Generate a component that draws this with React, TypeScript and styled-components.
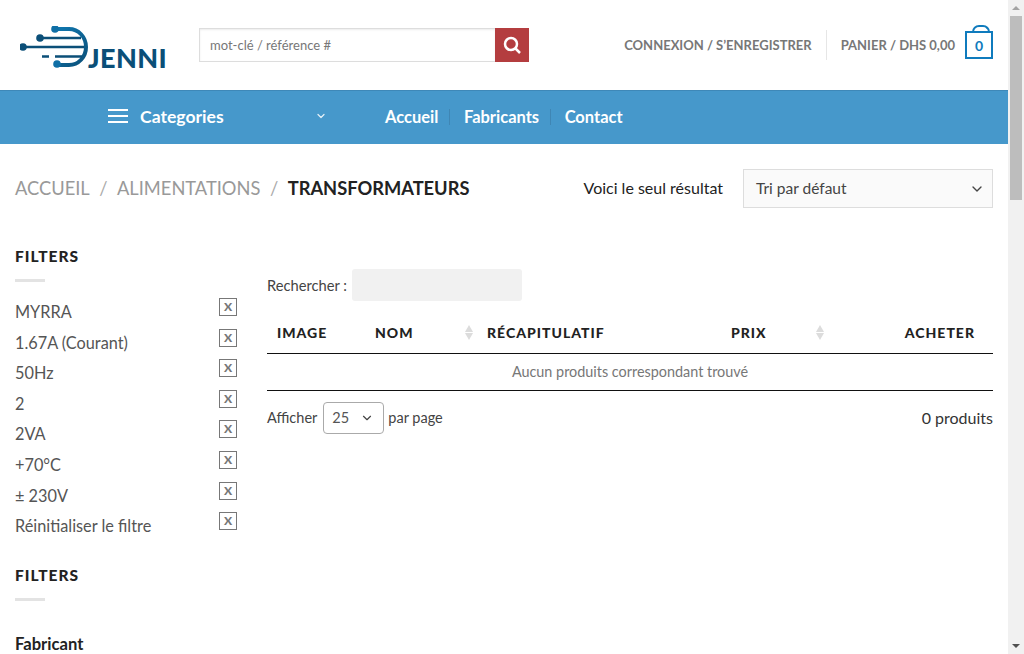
import styled, { createGlobalStyle } from "styled-components";
import { ChevronDown } from "lucide-react";

const GlobalStyle = createGlobalStyle`
  html, body {
    margin: 0;
    padding: 0;
    background: #fff;
    font-family: "Lato", "Liberation Sans", sans-serif;
    color: #555;
  }
  * { box-sizing: border-box; }
`;

const Shell = styled.div`
  display: flex;
  height: 654px;
  overflow: hidden;
`;

const Page = styled.div`
  flex: 1;
  min-width: 0;
`;

const ScrollTrack = styled.div`
  width: 16px;
  flex-shrink: 0;
  background: #f1f1f1;
  display: flex;
  flex-direction: column;
`;

const ScrollButton = styled.div<{ $down?: boolean }>`
  height: 16px;
  display: flex;
  align-items: center;
  justify-content: center;
  margin-top: ${(p) => (p.$down ? "auto" : "0")};
  &::after {
    content: "";
    width: 0;
    height: 0;
    border-left: 4px solid transparent;
    border-right: 4px solid transparent;
    ${(p) => (p.$down ? "border-top: 4px solid #505050;" : "border-bottom: 4px solid #a3a3a3;")}
  }
`;

const ScrollThumb = styled.div`
  height: 184px;
  margin: 0 2px;
  background: #bdbdbd;
`;

const Header = styled.header`
  height: 90px;
  display: flex;
  align-items: center;
  padding: 0 15px 0 20px;
`;

const Logo = styled.a`
  display: flex;
  align-items: flex-end;
  width: 179px;
  height: 42px;
  flex-shrink: 0;
  margin-top: 4px;
`;

const LogoText = styled.span`
  font-weight: 900;
  font-size: 27px;
  line-height: 20px;
  color: #0b4f78;
  letter-spacing: 0.4px;
`;

const SearchForm = styled.form`
  display: flex;
  width: 330px;
  height: 34px;
`;

const SearchInput = styled.div`
  flex: 1;
  border: 1px solid #ddd;
  border-right: none;
  box-shadow: inset 0 1px 2px rgba(0, 0, 0, 0.08);
  font-size: 13px;
  line-height: 32px;
  padding-left: 10px;
  color: #777;
`;

const SearchButton = styled.button`
  width: 34px;
  border: none;
  padding: 0;
  background: #b43d3f;
  display: flex;
  align-items: center;
  justify-content: center;
`;

const Account = styled.div`
  margin-left: auto;
  display: flex;
  align-items: center;
`;

const AccountLink = styled.a`
  font-size: 13px;
  font-weight: 700;
  color: #777;
  white-space: nowrap;
`;

const Divider = styled.span`
  width: 1px;
  height: 30px;
  background: #e6e6e6;
  margin: 0 14px;
`;

const Cart = styled.div`
  position: relative;
  width: 28px;
  height: 28px;
  margin-left: 10px;
  border: 2px solid #0f7bbd;
  color: #0f7bbd;
  font-size: 14px;
  font-weight: 700;
  display: flex;
  align-items: center;
  justify-content: center;
  &::before {
    content: "";
    position: absolute;
    left: 5px;
    top: -8px;
    width: 14px;
    height: 6px;
    border: 2px solid #0f7bbd;
    border-bottom: none;
    border-radius: 7px 7px 0 0;
  }
`;

const NavBar = styled.nav`
  height: 54px;
  background: #4698cb;
  display: flex;
  align-items: center;
  padding-left: 108px;
  box-shadow: inset 0 1px 0 #3e88b8;
`;

const CategoryMenu = styled.div`
  width: 277px;
  display: flex;
  align-items: center;
  padding-bottom: 2px;
  color: #fff;
  font-size: 17.600px;
  font-weight: 700;
`;

const Burger = styled.span`
  width: 20px;
  height: 14px;
  margin-right: 12px;
  border-top: 2px solid #fff;
  border-bottom: 2px solid #fff;
  position: relative;
  &::after {
    content: "";
    position: absolute;
    left: 0;
    right: 0;
    top: 4px;
    height: 2px;
    background: #fff;
  }
`;

const CategoryChevron = styled(ChevronDown)`
  margin-left: 91px;
  color: #fff;
  opacity: 0.85;
`;

const NavLink = styled.a<{ $last?: boolean }>`
  color: #fff;
  font-size: 16.500px;
  font-weight: 700;
  line-height: 16px;
  padding-right: 11px;
  margin-right: 13.500px;
  border-right: 1px solid ${(p) => (p.$last ? "transparent" : "#3f86b4")};
`;

const Toolbar = styled.div`
  height: 64px;
  margin-top: 25px;
  padding: 0 15px;
  display: flex;
  align-items: flex-start;
`;

const Breadcrumb = styled.div`
  font-size: 18.300px;
  line-height: 38px;
  color: #999;
  display: flex;
  text-transform: uppercase;
`;

const Slash = styled.span`
  margin: 0 9.500px;
  color: #aaa;
`;

const Current = styled.span`
  color: #222;
  font-weight: 700;
`;

const ResultCount = styled.div`
  margin-left: auto;
  font-size: 16px;
  line-height: 37px;
  color: #222;
`;

const SortSelect = styled.div`
  width: 250px;
  height: 39px;
  margin-left: 20px;
  border: 1px solid #ddd;
  background: #fafafa;
  font-size: 15.500px;
  line-height: 37px;
  padding: 0 7px 0 12px;
  color: #444;
  display: flex;
  align-items: center;
  justify-content: space-between;
`;

const Content = styled.div`
  display: flex;
  padding: 0 15px;
  margin-top: 13px;
`;

const Sidebar = styled.aside`
  width: 222px;
  flex-shrink: 0;
`;

const WidgetTitle = styled.h4`
  margin: 0;
  font-size: 15.500px;
  line-height: 20px;
  font-weight: 900;
  letter-spacing: 1px;
  color: #222;
  text-transform: uppercase;
`;

const SmallRule = styled.div`
  width: 30px;
  height: 3px;
  background: #e3e3e3;
  margin: 13px 0 17px;
`;

const FilterList = styled.ul`
  list-style: none;
  margin: 0 0 21px;
  padding: 0;
`;

const FilterItem = styled.li`
  height: 30.600px;
  display: flex;
  justify-content: space-between;
  font-size: 16.300px;
  line-height: 20px;
  color: #555;
  padding-top: 3px;
`;

const RemoveBox = styled.span`
  width: 18px;
  height: 18px;
  margin-top: -4px;
  border: 1px solid #777;
  display: flex;
  align-items: center;
  justify-content: center;
  font-size: 12px;
  font-weight: 900;
  line-height: 14px;
  color: #777;
  text-transform: uppercase;
`;

const FacetTitle = styled.h5`
  margin: 33px 0 0;
  font-size: 16.600px;
  line-height: 20px;
  font-weight: 700;
  color: #222;
`;

const Main = styled.main`
  flex: 1;
  margin-left: 30px;
  padding-top: 23px;
`;

const SearchRow = styled.div`
  display: flex;
  align-items: center;
  font-size: 14.700px;
  color: #444;
  height: 32px;
`;

const TableSearch = styled.div`
  width: 170px;
  height: 32px;
  margin-left: 5px;
  background: #f1f1f1;
  border-radius: 3px;
`;

const Table = styled.table`
  width: 100%;
  border-collapse: collapse;
  table-layout: fixed;
  margin-top: 12px;
`;

const Th = styled.th<{ $width: number; $right?: boolean }>`
  position: relative;
  width: ${(p) => p.$width}px;
  height: 40px;
  padding: ${(p) => (p.$right ? "0 18px 0 10px" : "0 10px")};
  border-bottom: 1px solid #111;
  text-align: ${(p) => (p.$right ? "right" : "left")};
  font-size: 14px;
  font-weight: 900;
  letter-spacing: 1px;
  color: #222;
  text-transform: uppercase;
`;

const SortArrows = styled.span`
  position: absolute;
  right: 4.500px;
  top: 12px;
  display: flex;
  flex-direction: column;
  gap: 1px;
  &::before,
  &::after {
    content: "";
    width: 0;
    height: 0;
    border-left: 4.500px solid transparent;
    border-right: 4.500px solid transparent;
  }
  &::before { border-bottom: 7px solid #dcdcdc; }
  &::after { border-top: 7px solid #dcdcdc; }
`;

const EmptyCell = styled.td`
  height: 37px;
  border-bottom: 1px solid #111;
  text-align: center;
  font-size: 14.400px;
  color: #777;
`;

const Footer = styled.div`
  display: flex;
  align-items: center;
  margin-top: 11px;
  font-size: 14.500px;
  color: #444;
`;

const PerPage = styled.div`
  width: 61px;
  height: 32px;
  margin: 0 4px 0 6px;
  border: 1px solid #aaa;
  border-radius: 4px;
  display: flex;
  align-items: center;
  justify-content: space-between;
  padding: 0 9px 0 8px;
  color: #555;
`;

const FooterLabel = styled.span`
  margin-top: -1px;
`;

const Total = styled.span`
  margin-left: auto;
  margin-top: -1px;
  font-size: 16px;
  color: #333;
`;

const filters = ["MYRRA", "1.67A (Courant)", "50Hz", "2", "2VA", "+70°C", "± 230V", "Réinitialiser le filtre"];

export default function App() {
  return (
    <Shell>
      <GlobalStyle />
      <Page>
        <Header>
          <Logo>
            <svg width="68" height="42" viewBox="20 23 68 42" fill="none">
              <defs>
                <linearGradient id="arc" x1="50" y1="25" x2="88" y2="62" gradientUnits="userSpaceOnUse">
                  <stop offset="0" stopColor="#0f7bb5" />
                  <stop offset="1" stopColor="#0b4f78" />
                </linearGradient>
              </defs>
              <path d="M55 26H69C78.500 26 86 34 86 44C86 54 78.500 62 69 62H57" stroke="url(#arc)" strokeWidth="4" />
              <path d="M40 35H81M23 44H84M42 53.500H49M55 53.500H82" stroke="#0b4f78" strokeWidth="2.500" />
              <circle cx="55" cy="26" r="3.800" fill="#0f6fa6" />
              <circle cx="40" cy="35" r="3.800" fill="#0b4f78" />
              <circle cx="23" cy="44" r="3.800" fill="#0b4f78" />
              <circle cx="57" cy="61" r="3.800" fill="#0f6fa6" />
            </svg>
            <LogoText>JENNI</LogoText>
          </Logo>
          <SearchForm>
            <SearchInput>mot-clé / référence #</SearchInput>
            <SearchButton type="button">
              <svg width="18" height="18" viewBox="0 0 18 18" fill="none" stroke="#fff" strokeWidth="2.500">
                <circle cx="8" cy="8" r="6" />
                <path d="M12.500 12.500L17 17" />
              </svg>
            </SearchButton>
          </SearchForm>
          <Account>
            <AccountLink>CONNEXION / S’ENREGISTRER</AccountLink>
            <Divider />
            <AccountLink>PANIER / DHS 0,00</AccountLink>
            <Cart>0</Cart>
          </Account>
        </Header>
        <NavBar>
          <CategoryMenu>
            <Burger />
            Categories
            <CategoryChevron size={12} strokeWidth={2.5} />
          </CategoryMenu>
          <NavLink>Accueil</NavLink>
          <NavLink>Fabricants</NavLink>
          <NavLink $last>Contact</NavLink>
        </NavBar>
        <Toolbar>
          <Breadcrumb>
            Accueil<Slash>/</Slash>Alimentations<Slash>/</Slash><Current>Transformateurs</Current>
          </Breadcrumb>
          <ResultCount>Voici le seul résultat</ResultCount>
          <SortSelect>
            Tri par défaut
            <ChevronDown size={16} color="#444" />
          </SortSelect>
        </Toolbar>
        <Content>
          <Sidebar>
            <WidgetTitle>Filters</WidgetTitle>
            <SmallRule />
            <FilterList>
              {filters.map((f) => (
                <FilterItem key={f}>
                  {f}
                  <RemoveBox>x</RemoveBox>
                </FilterItem>
              ))}
            </FilterList>
            <WidgetTitle>Filters</WidgetTitle>
            <SmallRule />
            <FacetTitle>Fabricant</FacetTitle>
          </Sidebar>
          <Main>
            <SearchRow>
              Rechercher :<TableSearch />
            </SearchRow>
            <Table>
              <thead>
                <tr>
                  <Th $width={98}>Image</Th>
                  <Th $width={112}>Nom<SortArrows /></Th>
                  <Th $width={244}>Récapitulatif</Th>
                  <Th $width={107}>Prix<SortArrows /></Th>
                  <Th $width={165} $right>Acheter</Th>
                </tr>
              </thead>
              <tbody>
                <tr>
                  <EmptyCell colSpan={5}>Aucun produits correspondant trouvé</EmptyCell>
                </tr>
              </tbody>
            </Table>
            <Footer>
              <FooterLabel>Afficher</FooterLabel>
              <PerPage>
                25
                <ChevronDown size={14} color="#444" />
              </PerPage>
              <FooterLabel>par page</FooterLabel>
              <Total>0 produits</Total>
            </Footer>
          </Main>
        </Content>
      </Page>
      <ScrollTrack>
        <ScrollButton />
        <ScrollThumb />
        <ScrollButton $down />
      </ScrollTrack>
    </Shell>
  );
}
